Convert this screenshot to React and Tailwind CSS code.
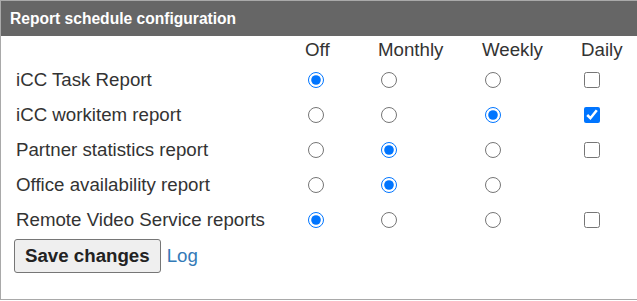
import { useState } from "react";

const reports = [
  { id: "task", label: "iCC Task Report", schedule: "off", daily: false, hasDaily: true },
  { id: "workitem", label: "iCC workitem report", schedule: "weekly", daily: true, hasDaily: true },
  { id: "partner", label: "Partner statistics report", schedule: "monthly", daily: false, hasDaily: true },
  { id: "office", label: "Office availability report", schedule: "monthly", daily: false, hasDaily: false },
  { id: "video", label: "Remote Video Service reports", schedule: "off", daily: false, hasDaily: true },
];

const columns = ["off", "monthly", "weekly"];

function App() {
  const [rows, setRows] = useState(reports);

  const setSchedule = (id, schedule) => {
    setRows(rows.map(r => (r.id === id ? { ...r, schedule } : r)));
  };

  const toggleDaily = (id) => {
    setRows(rows.map(r => (r.id === id ? { ...r, daily: !r.daily } : r)));
  };

  return (
    <div className="font-['Liberation_Sans',Arial,sans-serif] text-[#333] bg-white overflow-hidden">
      <div className="h-[300px] border border-r-0 border-[#a9a9a9]">
        {/* HEADER */}
        <div className="h-[35px] bg-[#666666] flex items-center pl-[9px]">
          <h2 className="text-[15.6px] font-bold text-white">Report schedule configuration</h2>
        </div>

        {/* TABLE */}
        <div className="pt-[3px] text-[18.7px] leading-[21.5px]">
          <div className="grid grid-cols-[304px_73px_104px_99px_1fr] h-[23px]">
            <div></div>
            <div>Off</div>
            <div>Monthly</div>
            <div>Weekly</div>
            <div>Daily</div>
          </div>

          {rows.map(r => (
            <div key={r.id} className="grid grid-cols-[304px_73px_104px_99px_1fr] h-[35px] items-center">
              <div className="pl-[15px]">{r.label}</div>
              {columns.map(c => (
                <div key={c} className="flex items-center">
                  <input
                    type="radio"
                    name={r.id}
                    checked={r.schedule === c}
                    onChange={() => setSchedule(r.id, c)}
                    className="w-[16px] h-[16px] ml-[3px]"
                  />
                </div>
              ))}
              <div className="flex items-center">
                {r.hasDaily && (
                  <input
                    type="checkbox"
                    checked={r.daily}
                    onChange={() => toggleDaily(r.id)}
                    className="w-[16px] h-[16px] ml-[3px]"
                  />
                )}
              </div>
            </div>
          ))}

          {/* ACTIONS */}
          <div className="flex items-center mt-[2px] ml-[13px] gap-[6px]">
            <button className="h-[34px] px-[10px] bg-[#efefef] border border-[#767676] rounded-[3px] font-bold text-[#222]">
              Save changes
            </button>
            <a href="#" className="text-[#337ab7]">Log</a>
          </div>
        </div>
      </div>
    </div>
  );
}

export default App;
